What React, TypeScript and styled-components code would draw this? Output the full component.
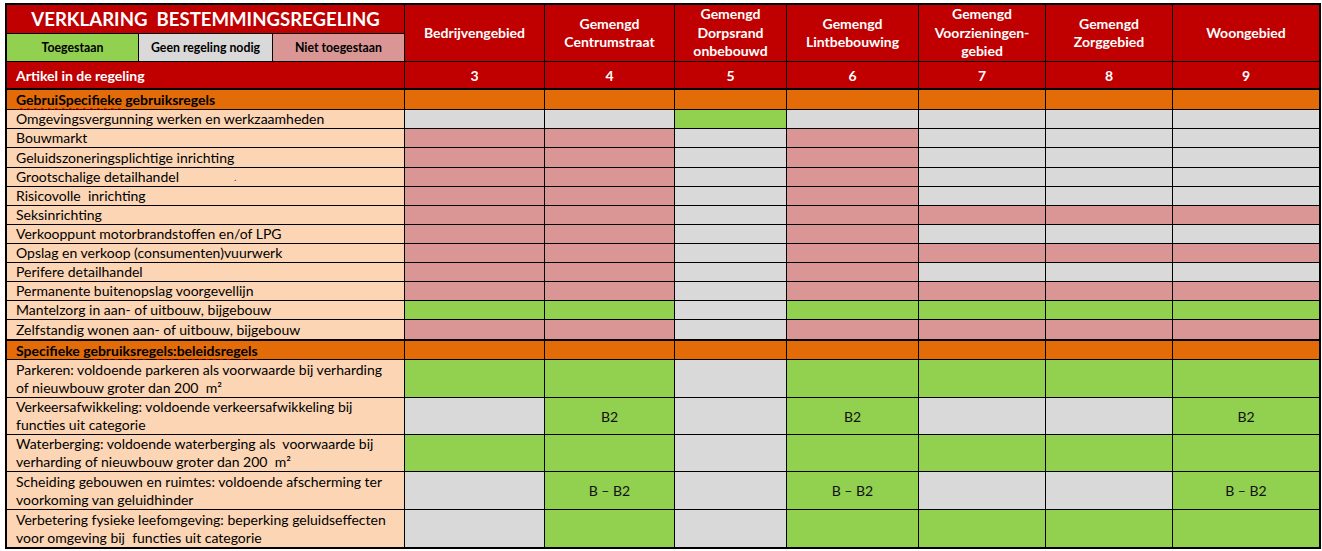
import React from "react";
import styled, { createGlobalStyle } from "styled-components";

type Status = "G" | "X" | "R";

const FILL: Record<Status, string> = {
  G: "#92D050",
  X: "#D9D9D9",
  R: "#DA9694",
};

const RED = "#C00000";
const ORANGE = "#E36C09";
const PEACH = "#FCD5B4";

const GlobalStyle = createGlobalStyle`
  html, body { margin: 0; padding: 0; background: #ffffff; }
  body { font-family: Lato, "Liberation Sans", sans-serif; color: #000; }
`;

const Page = styled.div`
  padding: 3px 0 0 5px;
`;

const Sheet = styled.div`
  display: grid;
  width: max-content;
  grid-template-columns: 397px 139px 129px 111px 131px 126px 126px 146px;
  grid-template-rows:
    28px 27px 26px 20px
    18px 18px 19px 18px 18px 18px 18px 18px 18px 18px 18px 19px
    19px 37px 36px 36px 37px 37px;
  gap: 1px;
  background: #000;
  border: 2px solid #000;
`;

const TitleCell = styled.div`
  background: ${RED};
  color: #fff;
  font-weight: 700;
  font-size: 18.6px;
  display: flex;
  align-items: center;
  justify-content: center;
  white-space: pre;
`;

const Legend = styled.div`
  display: grid;
  grid-template-columns: 131px 133px 131px;
  gap: 1px;
  background: #000;
`;

const LegendItem = styled.div<{ $status: Status }>`
  background: ${(p) => FILL[p.$status]};
  font-weight: 700;
  font-size: 12.3px;
  display: flex;
  align-items: center;
  justify-content: center;
`;

const HeaderCell = styled.div`
  grid-row: span 2;
  background: ${RED};
  color: #fff;
  font-weight: 700;
  font-size: 14px;
  line-height: 18.5px;
  text-align: center;
  display: flex;
  align-items: center;
  justify-content: center;
  white-space: pre-line;
`;

const ArticleLabel = styled.div`
  background: ${RED};
  color: #fff;
  font-weight: 700;
  font-size: 14px;
  display: flex;
  align-items: center;
  padding-left: 9px;
`;

const ArticleNumber = styled.div`
  background: ${RED};
  color: #fff;
  font-weight: 700;
  font-size: 14px;
  display: flex;
  align-items: center;
  justify-content: center;
`;

const SectionCell = styled.div`
  background: ${ORANGE};
  border-top: 1px solid #000;
  font-weight: 700;
  font-size: 14px;
  display: flex;
  align-items: center;
  padding-left: 9px;
  white-space: pre;
`;

const Squiggle = styled.span`
  text-decoration: underline wavy #e00000;
  text-decoration-thickness: 1px;
  text-underline-offset: 2px;
`;

const LabelCell = styled.div`
  background: ${PEACH};
  font-size: 14px;
  line-height: 18px;
  display: flex;
  align-items: center;
  padding-left: 9px;
  padding-right: 12px;
`;

const StatusCell = styled.div<{ $status: Status }>`
  background: ${(p) => FILL[p.$status]};
  font-size: 14px;
  display: flex;
  align-items: center;
  justify-content: center;
  color: #111;
`;

const StrayDot = styled.span`
  color: #1f1fd0;
  margin-left: 55px;
  font-size: 10px;
`;

const zones = [
  "Bedrijvengebied",
  "Gemengd\nCentrumstraat",
  "Gemengd\nDorpsrand\nonbebouwd",
  "Gemengd\nLintbebouwing",
  "Gemengd\nVoorzieningen-\ngebied",
  "Gemengd\nZorggebied",
  "Woongebied",
];

const articles = ["3", "4", "5", "6", "7", "8", "9"];

type Row = { label: React.ReactNode; cells: string; values?: (string | null)[] };

const usageRows: Row[] = [
  { label: "Omgevingsvergunning werken en werkzaamheden", cells: "XXGXXXX" },
  { label: "Bouwmarkt", cells: "RRXRXXX" },
  { label: "Geluidszoneringsplichtige inrichting", cells: "RRXRXXX" },
  {
    label: (
      <>
        Grootschalige detailhandel<StrayDot>.</StrayDot>
      </>
    ),
    cells: "RRXRXXX",
  },
  { label: "Risicovolle\u00a0 inrichting", cells: "RRXRXXX" },
  { label: "Seksinrichting", cells: "RRXRRRR" },
  { label: "Verkooppunt motorbrandstoffen en/of LPG", cells: "RRXRXXX" },
  { label: "Opslag en verkoop (consumenten)vuurwerk", cells: "RRXRRRR" },
  { label: "Perifere detailhandel", cells: "RRXRXXX" },
  { label: "Permanente buitenopslag voorgevellijn", cells: "RRXRRRR" },
  { label: "Mantelzorg in aan- of uitbouw, bijgebouw", cells: "GGXGGGG" },
  { label: "Zelfstandig wonen aan- of uitbouw, bijgebouw", cells: "RRXRRRR" },
];

const policyRows: Row[] = [
  {
    label: <span>Parkeren: voldoende parkeren als voorwaarde bij verharding of nieuwbouw groter dan 200&nbsp; m²</span>,
    cells: "GGXGGGG",
  },
  {
    label: <span>Verkeersafwikkeling: voldoende verkeersafwikkeling bij functies uit categorie</span>,
    cells: "XGXGXXG",
    values: [null, "B2", null, "B2", null, null, "B2"],
  },
  {
    label: (
      <span>
        Waterberging: voldoende waterberging als&nbsp; voorwaarde bij verharding of nieuwbouw groter dan 200&nbsp; m²
      </span>
    ),
    cells: "GGXGGGG",
  },
  {
    label: <span>Scheiding gebouwen en ruimtes: voldoende afscherming ter voorkoming van geluidhinder</span>,
    cells: "XGXGXXG",
    values: [null, "B – B2", null, "B – B2", null, null, "B – B2"],
  },
  {
    label: <span>Verbetering fysieke leefomgeving: beperking geluidseffecten voor omgeving bij&nbsp; functies uit categorie</span>,
    cells: "XGXGGGG",
  },
];

const renderRows = (rows: Row[]) =>
  rows.map((row, r) => (
    <React.Fragment key={r}>
      <LabelCell>{row.label}</LabelCell>
      {row.cells.split("").map((s, c) => (
        <StatusCell key={c} $status={s as Status}>
          {row.values?.[c] ?? null}
        </StatusCell>
      ))}
    </React.Fragment>
  ));

const SectionRow: React.FC<{ children: React.ReactNode }> = ({ children }) => (
  <>
    <SectionCell>{children}</SectionCell>
    {articles.map((a) => (
      <SectionCell key={a} />
    ))}
  </>
);

export default function App() {
  return (
    <Page>
      <GlobalStyle />
      <Sheet>
        <TitleCell>{"VERKLARING  BESTEMMINGSREGELING"}</TitleCell>
        {zones.map((z) => (
          <HeaderCell key={z}>{z}</HeaderCell>
        ))}
        <Legend>
          <LegendItem $status="G">Toegestaan</LegendItem>
          <LegendItem $status="X">Geen regeling nodig</LegendItem>
          <LegendItem $status="R">Niet toegestaan</LegendItem>
        </Legend>

        <ArticleLabel>Artikel in de regeling</ArticleLabel>
        {articles.map((a) => (
          <ArticleNumber key={a}>{a}</ArticleNumber>
        ))}

        <SectionRow>
          <Squiggle>GebruiSpecifieke</Squiggle> gebruiksregels
        </SectionRow>
        {renderRows(usageRows)}

        <SectionRow>
          Specifieke <Squiggle>gebruiksregels:beleidsregels</Squiggle>
        </SectionRow>
        {renderRows(policyRows)}
      </Sheet>
    </Page>
  );
}
